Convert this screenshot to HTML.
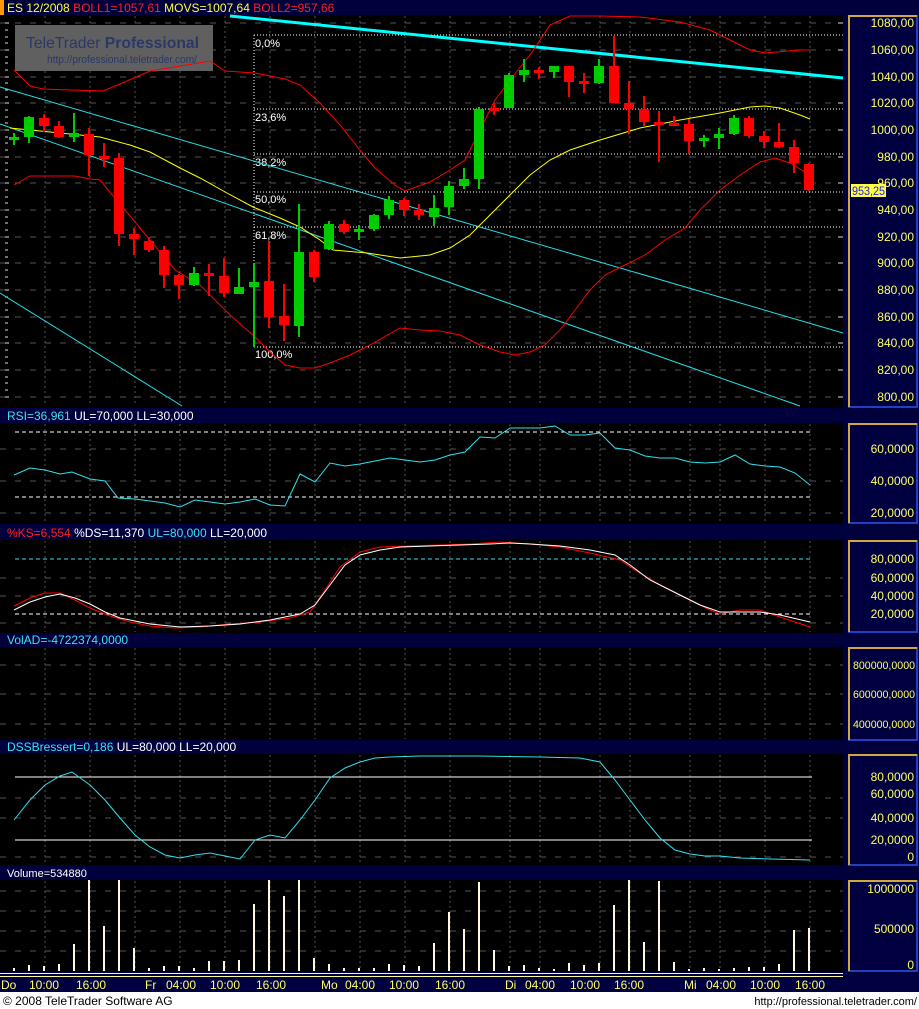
<!DOCTYPE html>
<html><head><meta charset="utf-8"><style>
html,body{margin:0;padding:0;background:#000040;}
svg{display:block;font-family:"Liberation Sans",sans-serif;}
</style></head><body>
<svg width="919" height="1009" viewBox="0 0 919 1009" xmlns="http://www.w3.org/2000/svg">
<rect width="919" height="1009" fill="#000040"/>
<rect x="0" y="0" width="919" height="15" fill="#00003c"/>
<rect x="0" y="0" width="4" height="15" fill="#ff9900"/>
<text x="7" y="12" font-size="12"><tspan fill="#ffff40">ES 12/2008 </tspan><tspan fill="#ff2020">BOLL1=1057,61 </tspan><tspan fill="#ffff40">MOVS=1007,64 </tspan><tspan fill="#ff2020">BOLL2=957,66</tspan></text>

<rect x="0" y="15" width="843" height="393" fill="#000"/>
<rect x="0" y="423" width="843" height="101" fill="#000"/>
<rect x="0" y="540" width="843" height="93" fill="#000"/>
<rect x="0" y="647" width="843" height="93" fill="#000"/>
<rect x="0" y="754" width="843" height="111" fill="#000"/>
<rect x="0" y="880" width="843" height="92" fill="#000"/>

<rect x="0" y="409" width="919" height="14" fill="#00003c"/>
<text x="7" y="420" font-size="12"><tspan fill="#40e0f0">RSI=36,961 </tspan><tspan fill="#fff">UL=70,000 LL=30,000</tspan></text>
<rect x="0" y="526" width="919" height="14" fill="#00003c"/>
<text x="7" y="537" font-size="12"><tspan fill="#ff2020">%KS=6,554 </tspan><tspan fill="#fff">%DS=11,370 </tspan><tspan fill="#40e0f0">UL=80,000 </tspan><tspan fill="#fff">LL=20,000</tspan></text>
<rect x="0" y="633" width="919" height="14" fill="#00003c"/>
<text x="7" y="644" font-size="12" fill="#40e0f0">VolAD=-4722374,0000</text>
<rect x="0" y="740" width="919" height="14" fill="#00003c"/>
<text x="7" y="751" font-size="12"><tspan fill="#40e0f0">DSSBressert=0,186 </tspan><tspan fill="#fff">UL=80,000 LL=20,000</tspan></text>
<rect x="0" y="866" width="919" height="14" fill="#00003c"/>
<text x="7" y="877" font-size="11" fill="#fff">Volume=534880</text>

<g stroke="#555" stroke-width="1" stroke-dasharray="2,3">
<path d="M45 16V406M90 16V406M135 16V406M180 16V406M225 16V406M270 16V406M315 16V406M360 16V406M405 16V406M450 16V406M510 16V406M540 16V406M600 16V406M630 16V406M690 16V406M720 16V406M765 16V406M810 16V406"/>
<path d="M45 424V522M90 424V522M135 424V522M180 424V522M225 424V522M270 424V522M315 424V522M360 424V522M405 424V522M450 424V522M510 424V522M540 424V522M600 424V522M630 424V522M690 424V522M720 424V522M765 424V522M810 424V522"/>
<path d="M45 541V632M90 541V632M135 541V632M180 541V632M225 541V632M270 541V632M315 541V632M360 541V632M405 541V632M450 541V632M510 541V632M540 541V632M600 541V632M630 541V632M690 541V632M720 541V632M765 541V632M810 541V632"/>
<path d="M45 648V739M90 648V739M135 648V739M180 648V739M225 648V739M270 648V739M315 648V739M360 648V739M405 648V739M450 648V739M510 648V739M540 648V739M600 648V739M630 648V739M690 648V739M720 648V739M765 648V739M810 648V739"/>
<path d="M45 755V864M90 755V864M135 755V864M180 755V864M225 755V864M270 755V864M315 755V864M360 755V864M405 755V864M450 755V864M510 755V864M540 755V864M600 755V864M630 755V864M690 755V864M720 755V864M765 755V864M810 755V864"/>
<path d="M45 881V970M90 881V970M135 881V970M180 881V970M225 881V970M270 881V970M315 881V970M360 881V970M405 881V970M450 881V970M510 881V970M540 881V970M600 881V970M630 881V970M690 881V970M720 881V970M765 881V970M810 881V970"/>
</g>
<g stroke="#555" stroke-width="1" stroke-dasharray="6,9">
<path d="M0 23H843M0 50H843M0 77H843M0 103H843M0 130H843M0 157H843M0 183H843M0 210H843M0 237H843M0 263H843M0 290H843M0 317H843M0 343H843M0 370H843M0 397H843"/>
<path d="M0 449H843M0 481H843M0 513H843"/>
<path d="M0 578H843M0 596H843M0 623H843"/>
<path d="M0 665H843M0 694H843M0 724H843"/>
<path d="M0 798H843M0 818H843M0 857H843"/>
<path d="M0 891H843M0 911H843M0 931H843M0 951H843"/>
</g>
<g stroke="#ddd" stroke-width="1">
<path d="M5 23h4M5 30h3M5 37h3M5 43h3M5 50h4M5 57h3M5 63h3M5 70h3M5 77h4M5 83h3M5 90h3M5 97h3M5 103h4M5 110h3M5 117h3M5 123h3M5 130h4M5 137h3M5 143h3M5 150h3M5 157h4M5 163h3M5 170h3M5 177h3M5 183h4M5 190h3M5 197h3M5 203h3M5 210h4M5 217h3M5 223h3M5 230h3M5 237h4M5 243h3M5 250h3M5 257h3M5 263h4M5 270h3M5 277h3M5 283h3M5 290h4M5 297h3M5 303h3M5 310h3M5 317h4M5 323h3M5 330h3M5 337h3M5 343h4M5 350h3M5 357h3M5 363h3M5 370h4M5 377h3M5 383h3M5 390h3M5 397h4"/>
<path d="M838 23h5M838 50h5M838 77h5M838 103h5M838 130h5M838 157h5M838 183h5M838 210h5M838 237h5M838 263h5M838 290h5M838 317h5M838 343h5M838 370h5M838 397h5"/>
</g>

<rect x="15" y="25" width="198" height="46" fill="#606060"/>
<text x="26" y="48" font-size="16" fill="#2a3868" textLength="173" lengthAdjust="spacingAndGlyphs">TeleTrader <tspan font-weight="bold">Professional</tspan></text>
<text x="47" y="63" font-size="11" fill="#2a3868" textLength="150" lengthAdjust="spacingAndGlyphs">http://professional.teletrader.com/</text>

<g stroke="#fff" stroke-width="1" stroke-dasharray="1,2" fill="none">
<path d="M254 35V347M254 35H843M254 109H843M254 154H843M254 192H843M254 227H843M254 347H843"/>
</g>
<g fill="#fff" font-size="11">
<text x="255" y="47">0,0%</text><text x="255" y="121">23,6%</text><text x="255" y="166">38,2%</text><text x="255" y="203">50,0%</text><text x="255" y="239">61,8%</text><text x="255" y="358">100,0%</text>
</g>

<line x1="230" y1="16" x2="843" y2="78" stroke="#00ffff" stroke-width="3"/>
<line x1="0" y1="87" x2="843" y2="333" stroke="#20e0e8" stroke-width="1"/>
<line x1="0" y1="124" x2="800" y2="406" stroke="#20e0e8" stroke-width="1"/>
<line x1="0" y1="293" x2="182" y2="406" stroke="#20e0e8" stroke-width="1"/>

<polyline fill="none" stroke="#ff0000" stroke-width="1" points="14,70 30,86 43,89 70,90 103,91 120,84 150,71 210,61 225,71 255,73 285,79 300,85 320,103 340,125 360,150 375,168 395,185 405,191 430,182 450,170 465,160 480,130 495,100 510,80 530,55 550,25 570,16 600,16 640,17 680,22 710,30 730,40 750,50 765,53 800,50 810,50"/>
<polyline fill="none" stroke="#ff0000" stroke-width="1" points="14,185 30,176 75,176 90,179 100,180 125,210 150,240 175,270 200,285 230,315 255,337 270,352 285,365 300,368 315,368 330,363 350,355 370,345 400,328 420,330 440,331 460,335 480,345 500,352 515,355 530,352 545,345 560,330 575,310 590,290 605,275 625,265 645,255 665,240 685,228 700,210 720,190 740,175 760,162 775,158 790,163 805,172 810,176"/>
<polyline fill="none" stroke="#ffff00" stroke-width="1" points="10,128 60,133 100,137 130,145 150,152 165,160 180,168 200,178 227,193 253,207 280,218 300,227 320,240 333,250 367,253 400,258 430,255 450,248 470,235 490,215 510,195 530,175 550,160 570,150 600,140 640,128 680,120 720,113 750,107 765,106 780,108 800,115 810,119"/>

<g stroke-width="2">
<g stroke="#00cc00" fill="#00cc00">
<path d="M14 133V145M29 116V143M74 113V142M194 267V286M239 268V294M254 263V347M299 204V337M329 221V250M359 225V240M374 214V231M389 196V219M434 195V226M449 181V215M464 168V189M479 107V189M509 73V108M524 59V82M554 66V78M599 59V84M704 135V147M719 128V149M734 115V135"/>
</g>
<g fill="#00cc00">
<rect x="9" y="137" width="10" height="3"/><rect x="24" y="117" width="10" height="20"/><rect x="69" y="133" width="10" height="4"/><rect x="189" y="273" width="10" height="12"/><rect x="234" y="287" width="10" height="7"/><rect x="249" y="282" width="10" height="5"/><rect x="294" y="252" width="10" height="74"/><rect x="324" y="224" width="10" height="25"/><rect x="354" y="229" width="10" height="3"/><rect x="369" y="215" width="10" height="14"/><rect x="384" y="200" width="10" height="15"/><rect x="429" y="208" width="10" height="9"/><rect x="444" y="186" width="10" height="21"/><rect x="459" y="179" width="10" height="7"/><rect x="474" y="109" width="10" height="70"/><rect x="504" y="75" width="10" height="33"/><rect x="519" y="70" width="10" height="5"/><rect x="549" y="66" width="10" height="6"/><rect x="594" y="66" width="10" height="17"/><rect x="699" y="138" width="10" height="3"/><rect x="714" y="134" width="10" height="4"/><rect x="729" y="118" width="10" height="16"/>
</g>
<g stroke="#ff0000">
<path d="M44 114V132M59 121V138M89 128V176M104 143V167M119 153V246M134 228V255M149 237V252M164 246V288M179 274V299M209 264V296M224 258V297M269 241V328M284 284V341M314 250V282M344 220V234M404 198V216M419 204V220M494 103V115M539 67V79M569 66V97M584 73V93M614 36V103M629 81V134M644 96V126M659 111V162M674 116V126M689 119V154M749 116V138M764 131V148M779 123V148M794 140V173M809 163V191"/>
</g>
<g fill="#ff0000">
<rect x="39" y="118" width="10" height="8"/><rect x="54" y="126" width="10" height="11"/><rect x="84" y="134" width="10" height="21"/><rect x="99" y="156" width="10" height="3"/><rect x="114" y="158" width="10" height="76"/><rect x="129" y="234" width="10" height="5"/><rect x="144" y="241" width="10" height="9"/><rect x="159" y="250" width="10" height="25"/><rect x="174" y="275" width="10" height="10"/><rect x="204" y="273" width="10" height="3"/><rect x="219" y="276" width="10" height="17"/><rect x="264" y="281" width="10" height="36"/><rect x="279" y="316" width="10" height="9"/><rect x="309" y="252" width="10" height="25"/><rect x="339" y="224" width="10" height="8"/><rect x="399" y="200" width="10" height="10"/><rect x="414" y="210" width="10" height="5"/><rect x="489" y="108" width="10" height="3"/><rect x="534" y="70" width="10" height="3"/><rect x="564" y="66" width="10" height="16"/><rect x="579" y="81" width="10" height="3"/><rect x="609" y="66" width="10" height="37"/><rect x="624" y="103" width="10" height="6"/><rect x="639" y="109" width="10" height="13"/><rect x="654" y="122" width="10" height="3"/><rect x="669" y="123" width="10" height="3"/><rect x="684" y="124" width="10" height="17"/><rect x="744" y="118" width="10" height="18"/><rect x="759" y="136" width="10" height="6"/><rect x="774" y="142" width="10" height="5"/><rect x="789" y="147" width="10" height="16"/><rect x="804" y="164" width="10" height="26"/>
</g>
</g>

<g stroke="#fff" stroke-dasharray="4,3"><path d="M15 432H812M15 497H812"/></g>
<polyline fill="none" stroke="#30e0f0" points="14,475 30,468 45,470 60,474 72,472 90,479 105,481 118,498 135,499 150,501 165,503 180,507 195,500 210,502 225,504 240,502 255,499 270,505 285,506 300,474 315,482 330,463 345,466 360,464 375,461 390,458 405,460 420,462 435,460 450,455 465,452 480,437 495,438 510,428 525,428 540,428 555,426 570,435 585,435 600,433 615,448 630,450 645,456 660,458 675,458 690,462 705,463 720,462 735,455 750,464 765,466 780,467 795,473 810,485"/>

<path d="M15 559H812" stroke="#30e0f0" stroke-dasharray="4,3"/>
<path d="M15 614H812" stroke="#fff" stroke-dasharray="4,3"/>
<polyline fill="none" stroke="#ff0000" points="14,606 30,598 45,593 60,593 75,600 90,608 110,616 130,622 150,626 175,628 200,627 230,624 260,622 290,618 310,612 325,590 340,567 360,552 380,547 410,546 440,545 470,544 500,542 530,544 560,547 590,553 620,560 635,570 660,585 690,600 710,610 720,614 740,610 760,610 780,617 810,627"/>
<polyline fill="none" stroke="#fff" points="14,610 30,602 45,597 60,594 75,598 90,604 105,612 120,618 150,624 180,627 210,626 240,624 270,620 300,614 315,605 330,585 345,565 360,555 380,550 400,547 430,546 460,545 490,544 510,543 530,544 560,546 590,550 615,555 630,565 650,580 680,595 700,605 720,612 740,612 760,612 780,615 810,622"/>

<path d="M15 777H812M15 840H812" stroke="#fff" stroke-width="1"/>
<polyline fill="none" stroke="#30e0f0" points="14,820 30,800 45,785 60,776 72,772 90,785 105,800 120,818 135,835 150,847 165,855 180,858 195,855 210,853 225,856 240,859 255,840 270,835 285,838 300,820 315,800 330,778 345,768 360,762 375,758 390,757 420,756 480,756 540,757 580,758 600,762 615,780 630,800 645,820 660,838 675,850 690,854 705,856 720,856 740,858 770,859 810,860"/>

<g fill="#fff8e0">
<rect x="13" y="968" width="2" height="3"/><rect x="28" y="965" width="2" height="6"/><rect x="43" y="966" width="2" height="5"/><rect x="58" y="964" width="2" height="7"/><rect x="73" y="944" width="2" height="27"/><rect x="88" y="880" width="2" height="91"/><rect x="103" y="926" width="2" height="45"/><rect x="118" y="880" width="2" height="91"/><rect x="133" y="948" width="2" height="23"/><rect x="148" y="968" width="2" height="3"/><rect x="163" y="966" width="2" height="5"/><rect x="178" y="966" width="2" height="5"/><rect x="193" y="968" width="2" height="3"/><rect x="208" y="961" width="2" height="10"/><rect x="223" y="961" width="2" height="10"/><rect x="238" y="960" width="2" height="11"/><rect x="253" y="904" width="2" height="67"/><rect x="268" y="880" width="2" height="91"/><rect x="283" y="896" width="2" height="75"/><rect x="298" y="880" width="2" height="91"/><rect x="313" y="958" width="2" height="13"/><rect x="328" y="964" width="2" height="7"/><rect x="343" y="968" width="2" height="3"/><rect x="358" y="968" width="2" height="3"/><rect x="373" y="968" width="2" height="3"/><rect x="388" y="964" width="2" height="7"/><rect x="403" y="965" width="2" height="6"/><rect x="418" y="966" width="2" height="5"/><rect x="433" y="943" width="2" height="28"/><rect x="448" y="912" width="2" height="59"/><rect x="463" y="929" width="2" height="42"/><rect x="478" y="882" width="2" height="89"/><rect x="493" y="950" width="2" height="21"/><rect x="508" y="966" width="2" height="5"/><rect x="523" y="965" width="2" height="6"/><rect x="538" y="968" width="2" height="3"/><rect x="553" y="969" width="2" height="2"/><rect x="568" y="963" width="2" height="8"/><rect x="583" y="965" width="2" height="6"/><rect x="598" y="963" width="2" height="8"/><rect x="613" y="905" width="2" height="66"/><rect x="628" y="880" width="2" height="91"/><rect x="643" y="942" width="2" height="29"/><rect x="658" y="881" width="2" height="90"/><rect x="673" y="962" width="2" height="9"/><rect x="688" y="969" width="2" height="2"/><rect x="703" y="968" width="2" height="3"/><rect x="718" y="969" width="2" height="2"/><rect x="733" y="968" width="2" height="3"/><rect x="748" y="967" width="2" height="4"/><rect x="763" y="967" width="2" height="4"/><rect x="778" y="964" width="2" height="7"/><rect x="793" y="930" width="2" height="41"/><rect x="808" y="928" width="2" height="43"/>
</g>

<g fill="#000040" stroke-width="2">
<rect x="849" y="16" width="68" height="391" stroke="#2040c0"/>
<rect x="849" y="424" width="68" height="99" stroke="#2040c0"/>
<rect x="849" y="541" width="68" height="91" stroke="#2040c0"/>
<rect x="849" y="648" width="68" height="92" stroke="#2040c0"/>
<rect x="849" y="755" width="68" height="110" stroke="#2040c0"/>
<rect x="849" y="881" width="68" height="90" stroke="#2040c0"/>
</g>
<g stroke="#d0a840" stroke-width="2" fill="none">
<path d="M849 407V16H917M849 523V424H917M849 632V541H917M849 740V648H917M849 865V755H917M849 971V881H917"/>
</g>
<g fill="#ffff60" font-size="12" text-anchor="end">
<text x="914" y="27">1080,00</text><text x="914" y="54">1060,00</text><text x="914" y="81">1040,00</text><text x="914" y="107">1020,00</text><text x="914" y="134">1000,00</text><text x="914" y="161">980,00</text><text x="914" y="187">960,00</text><text x="914" y="214">940,00</text><text x="914" y="241">920,00</text><text x="914" y="267">900,00</text><text x="914" y="294">880,00</text><text x="914" y="321">860,00</text><text x="914" y="347">840,00</text><text x="914" y="374">820,00</text><text x="914" y="401">800,00</text>
<text x="914" y="453">60,0000</text><text x="914" y="485">40,0000</text><text x="914" y="517">20,0000</text>
<text x="914" y="563">80,0000</text><text x="914" y="582">60,0000</text><text x="914" y="600">40,0000</text><text x="914" y="618">20,0000</text>
<text x="914" y="798">60,0000</text>
<text x="914" y="781">80,0000</text><text x="914" y="822">40,0000</text><text x="914" y="844">20,0000</text><text x="914" y="861">0</text>
<text x="914" y="893">1000000</text><text x="914" y="933">500000</text><text x="914" y="969">0</text>
</g>
<g fill="#ffff60" font-size="11">
<text x="853" y="669" textLength="62" lengthAdjust="spacingAndGlyphs">800000,0000</text>
<text x="853" y="698" textLength="62" lengthAdjust="spacingAndGlyphs">600000,0000</text>
<text x="853" y="728" textLength="62" lengthAdjust="spacingAndGlyphs">400000,0000</text>
</g>
<rect x="851" y="184" width="35" height="13" fill="#ffff40"/>
<text x="852" y="195" font-size="12" fill="#2020ff" textLength="33" lengthAdjust="spacingAndGlyphs">953,25</text>

<rect x="0" y="972" width="843" height="20" fill="#000040"/>
<path d="M0 973.5H843M0 976.5H843" stroke="#ffff90" stroke-width="1"/>
<g fill="#ffff60" font-size="12">
<text x="1" y="989">Do</text><text x="29" y="989">10:00</text><text x="76" y="989">16:00</text>
<text x="145" y="989">Fr</text><text x="166" y="989">04:00</text><text x="210" y="989">10:00</text><text x="256" y="989">16:00</text>
<text x="321" y="989">Mo</text><text x="345" y="989">04:00</text><text x="389" y="989">10:00</text><text x="435" y="989">16:00</text>
<text x="505" y="989">Di</text><text x="525" y="989">04:00</text><text x="570" y="989">10:00</text><text x="614" y="989">16:00</text>
<text x="684" y="989">Mi</text><text x="706" y="989">04:00</text><text x="750" y="989">10:00</text><text x="795" y="989">16:00</text>
</g>
<rect x="0" y="992" width="919" height="17" fill="#fff"/>
<text x="3" y="1005" font-size="12" fill="#000">© 2008 TeleTrader Software AG</text>
<text x="917" y="1005" font-size="11" fill="#000" text-anchor="end">http://professional.teletrader.com/</text>
</svg>
</body></html>
